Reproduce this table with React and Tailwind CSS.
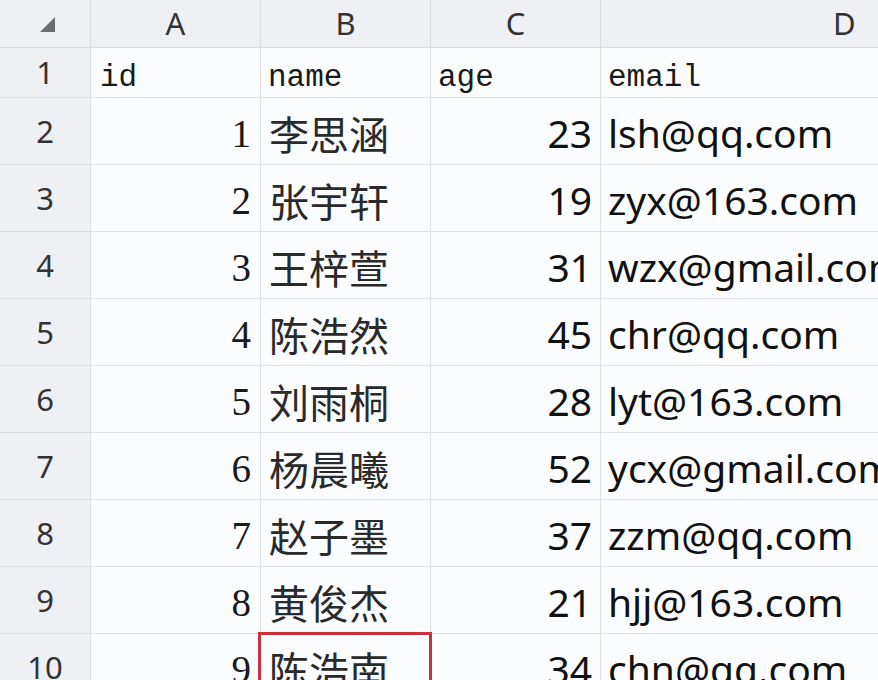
const rows = [
  { id: 1, name: '李思涵', age: 23, email: 'lsh@qq.com' },
  { id: 2, name: '张宇轩', age: 19, email: 'zyx@163.com' },
  { id: 3, name: '王梓萱', age: 31, email: 'wzx@gmail.com' },
  { id: 4, name: '陈浩然', age: 45, email: 'chr@qq.com' },
  { id: 5, name: '刘雨桐', age: 28, email: 'lyt@163.com' },
  { id: 6, name: '杨晨曦', age: 52, email: 'ycx@gmail.com' },
  { id: 7, name: '赵子墨', age: 37, email: 'zzm@qq.com' },
  { id: 8, name: '黄俊杰', age: 21, email: 'hjj@163.com' },
  { id: 9, name: '陈浩南', age: 34, email: 'chn@qq.com' },
];

const sans = "font-['Noto_Sans',sans-serif]";
const cjk = "font-['Noto_Sans_CJK_SC',sans-serif]";
const mono = "font-['Liberation_Mono',monospace]";
const serif = "font-['Liberation_Serif',serif]";

const head = `bg-[#eef0f3] border-r border-b border-[#d9dce1] text-[#333] ${sans} text-[31px] flex items-center justify-center`;
const cell = 'bg-[#fbfcfe] border-r border-b border-[#dfe2e6] flex items-center whitespace-nowrap';

export default function App() {
  return (
    <div className="w-[878px] h-[680px] overflow-hidden bg-[#fbfcfe]">
      <div className="grid grid-cols-[91px_170px_170px_170px_488px] grid-rows-[48px_50px_repeat(9,67px)] w-[1089px]">
        <div className={`${head} relative`}>
          <div className="absolute left-[40px] top-[17px] w-0 h-0 border-l-[15px] border-l-transparent border-b-[15px] border-b-[#6b6d70]" />
        </div>
        <div className={head}>A</div>
        <div className={head}>B</div>
        <div className={head}>C</div>
        <div className={`${head} justify-start pl-[232px]`}>D</div>

        <div className={head}>1</div>
        <div className={`${cell} ${mono} text-[31px] text-[#1a1a1a] pl-[9px] pt-[12px]`}>id</div>
        <div className={`${cell} ${mono} text-[31px] text-[#1a1a1a] pl-[7px] pt-[12px]`}>name</div>
        <div className={`${cell} ${mono} text-[31px] text-[#1a1a1a] pl-[7px] pt-[12px]`}>age</div>
        <div className={`${cell} ${mono} text-[31px] text-[#1a1a1a] pl-[7px] pt-[12px]`}>email</div>

        {rows.map((r, i) => (
          <Row key={r.id} r={r} n={i + 2} selected={i === 8} />
        ))}
      </div>
    </div>
  );
}

function Row({ r, n, selected }) {
  return (
    <>
      <div className={head}>{n}</div>
      <div className={`${cell} justify-end pr-[9px] ${serif} text-[39px] text-[#1a1a1a] pt-[6px]`}>{r.id}</div>
      <div className={`${cell} relative pl-[8px] pt-[4px] ${cjk} text-[40px] text-[#2a2a2a]`}>
        {selected && (
          <div className="absolute -left-[3px] -top-[2px] w-[174px] h-[80px] border-[3px] border-[#c8323a] z-10" />
        )}
        {r.name}
      </div>
      <div className={`${cell} justify-end pr-[8px] pt-[4px] ${sans} text-[39px] text-[#111]`}>{r.age}</div>
      <div className={`${cell} pl-[7px] pt-[4px] ${sans} text-[39px] text-[#111]`}>{r.email}</div>
    </>
  );
}
